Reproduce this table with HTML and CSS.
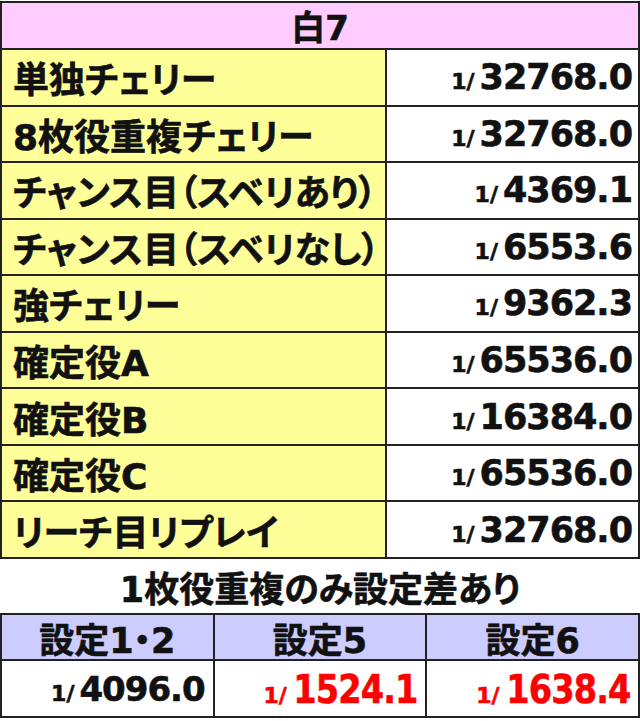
FILE: index.html
```html
<!DOCTYPE html>
<html lang="ja">
<head>
<meta charset="utf-8">
<title>白7</title>
<link rel="stylesheet" href="styles.css">
</head>
<body>
<div class="main">
  <div class="head">白7</div>
  <div class="lab">単独チェリー</div><div class="val"><span><span class="one">1/</span>32768.0</span></div>
  <div class="lab">8枚役重複チェリー</div><div class="val"><span><span class="one">1/</span>32768.0</span></div>
  <div class="lab">チャンス目（スベリあり）</div><div class="val"><span><span class="one">1/</span>4369.1</span></div>
  <div class="lab">チャンス目（スベリなし）</div><div class="val"><span><span class="one">1/</span>6553.6</span></div>
  <div class="lab">強チェリー</div><div class="val"><span><span class="one">1/</span>9362.3</span></div>
  <div class="lab">確定役A</div><div class="val"><span><span class="one">1/</span>65536.0</span></div>
  <div class="lab">確定役B</div><div class="val"><span><span class="one">1/</span>16384.0</span></div>
  <div class="lab">確定役C</div><div class="val"><span><span class="one">1/</span>65536.0</span></div>
  <div class="lab">リーチ目リプレイ</div><div class="val"><span><span class="one">1/</span>32768.0</span></div>
</div>
<div class="title">1枚役重複のみ設定差あり</div>
<div class="sub">
  <div class="shead">設定1・2</div>
  <div class="shead">設定5</div>
  <div class="shead">設定6</div>
  <div class="sval"><span><span class="one">1/</span>4096.0</span></div>
  <div class="sval red"><span class="one">1/</span><span class="big">1524.1</span></div>
  <div class="sval red"><span class="one">1/</span><span class="big">1638.4</span></div>
</div>
</body>
</html>
```
FILE: styles.css
```css
html, body {
  margin: 0;
  padding: 0;
  background: #ffffff;
}
body {
  width: 640px;
  font-family: "DejaVu Sans", "Noto Sans CJK JP", sans-serif;
  font-weight: 700;
  color: #111111;
  -webkit-text-stroke: 0.6px currentColor;
}
.main {
  margin-top: 1px;
  box-sizing: border-box;
  width: 640px;
  height: 558px;
  border: 2px solid #222222;
  background: #222222;
  display: grid;
  grid-template-columns: 383px 1fr;
  grid-template-rows: 45px repeat(9, 1fr);
  gap: 2px;
}
.head {
  grid-column: 1 / 3;
  background: #ffccff;
  display: flex;
  align-items: center;
  justify-content: center;
  font-size: 34px;
  font-feature-settings: "palt";
}
.lab {
  background: #ffff99;
  display: flex;
  align-items: center;
  padding-left: 11px;
  font-size: 36px;
  font-feature-settings: "palt";
  white-space: nowrap;
}
.val {
  background: #ffffff;
  display: flex;
  align-items: center;
  justify-content: flex-end;
  padding-right: 6px;
  font-size: 35px;
  letter-spacing: -1px;
  white-space: nowrap;
}
.one {
  font-size: 22px;
  margin-right: 5px;
  letter-spacing: 0;
}
.title {
  height: 54px;
  display: flex;
  align-items: center;
  justify-content: center;
  font-size: 35px;
  font-feature-settings: "palt";
}
.sub {
  box-sizing: border-box;
  width: 640px;
  height: 105px;
  border: 2px solid #222222;
  background: #222222;
  display: grid;
  grid-template-columns: repeat(3, 1fr);
  grid-template-rows: 44px 1fr;
  gap: 2px;
}
.shead {
  background: #ccccff;
  display: flex;
  align-items: center;
  justify-content: center;
  font-size: 35px;
  font-feature-settings: "palt";
}
.sval {
  background: #ffffff;
  display: flex;
  align-items: center;
  justify-content: flex-end;
  padding-right: 8px;
  font-size: 34px;
  letter-spacing: -1px;
  white-space: nowrap;
}
.red {
  color: #ff0000;
  align-items: baseline;
  padding-top: 6px;
}
.red .one {
  margin-right: 2px;
}
.big {
  display: inline-block;
  font-size: 39px;
  letter-spacing: -1px;
  transform: scaleX(0.86);
  transform-origin: right center;
  margin-left: -16px;
}
```
